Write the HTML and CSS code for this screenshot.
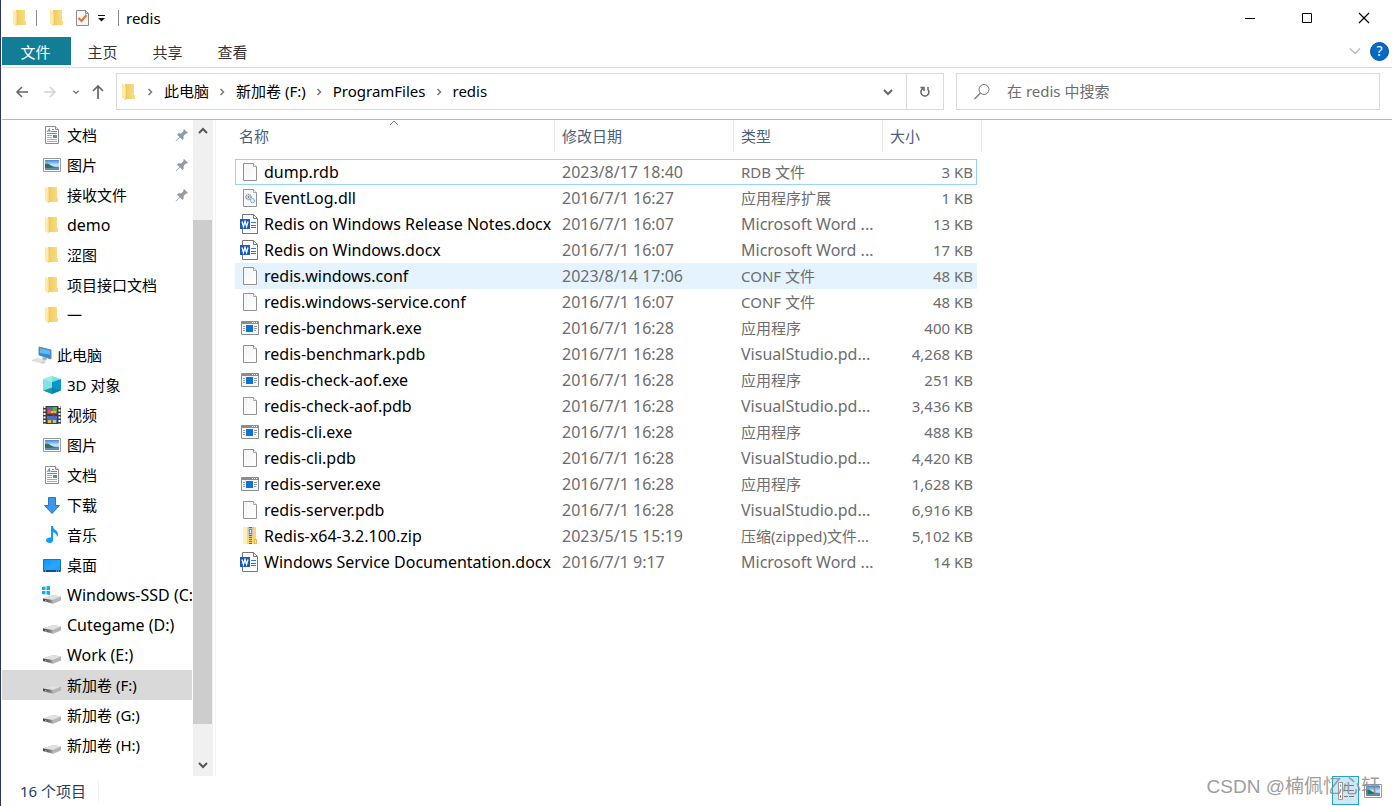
FILE: index.html
```html
<!DOCTYPE html>
<html lang="zh-CN">
<head>
<meta charset="utf-8">
<title>redis</title>
<link rel="stylesheet" href="styles.css">
</head>
<body>
<svg class="defs" aria-hidden="true">
  <defs>
    <linearGradient id="g-folder" x1="0" x2="1"><stop offset="0" stop-color="#f0cb62"/><stop offset="1" stop-color="#fbdd85"/></linearGradient>
    <linearGradient id="g-page" x1="0" y1="0" x2="1" y2="1"><stop offset="0" stop-color="#f3f4f5"/><stop offset="1" stop-color="#ffffff"/></linearGradient>
    <linearGradient id="g-sky" x1="0" y1="0" x2="0" y2="1"><stop offset="0" stop-color="#3f86dc"/><stop offset=".5" stop-color="#c6e6fa"/><stop offset="1" stop-color="#6fa3c8"/></linearGradient>
    <linearGradient id="g-desk" x1="0" y1="0" x2="1" y2="1"><stop offset="0" stop-color="#0d95f7"/><stop offset=".6" stop-color="#2ba7ff"/><stop offset="1" stop-color="#0d95f7"/></linearGradient>
    <linearGradient id="g-drive" x1="0" x2="1"><stop offset="0" stop-color="#454746"/><stop offset=".6" stop-color="#6f7171"/><stop offset="1" stop-color="#9d9fa1"/></linearGradient>
  </defs>
  <symbol id="folder" viewBox="0 0 20 20"><path d="M6 2h9v11h1v4H6z" fill="url(#g-folder)"/><path d="M3 2h1l3 2.500v13.500h-1L3 16z" fill="#ffe9a6"/><path d="M7 4.500V16l-1 2" stroke="#e9bf55" stroke-width=".6" fill="none"/></symbol>
  <symbol id="page" viewBox="0 0 20 20"><path d="M3.500 1.500h10l3 3v14h-13z" fill="url(#g-page)" stroke="#919191"/><path d="M13.500 1.500v3h3" fill="#fff" stroke="#a5a5a5"/></symbol>
  <symbol id="dll" viewBox="0 0 20 20"><use href="#page"/><circle cx="8.500" cy="9" r="2.500" fill="#eee" stroke="#8b9196" stroke-width="1.500" stroke-dasharray="1.200 .6"/><circle cx="8.500" cy="9" r=".9" fill="#7b8288"/><circle cx="12.500" cy="12.500" r="2.100" fill="#e4f3fa" stroke="#7ab4d2" stroke-width="1.300" stroke-dasharray="1.100 .5"/></symbol>
  <symbol id="word" viewBox="0 0 20 20"><path d="M2.500.5h11l4 4v15h-15z" fill="#fff" stroke="#777"/><path d="M13.500.5v4h4" fill="none" stroke="#777"/><path d="M11 8.500h5M11 11.500h5M11 13.500h5" stroke="#2b7cd3"/><path d="M0 5h10v10H0z" fill="#185abd"/><path d="M2 7.500l1.400 5 1.600-5 1.600 5 1.400-5" fill="none" stroke="#fff" stroke-width="1.300"/></symbol>
  <symbol id="exe" viewBox="0 0 20 20"><path d="M1.500 3.500h17v13h-17z" fill="#f6f6f6" stroke="#8a8e92"/><path d="M2 5h16" stroke="#8a8e92" stroke-width="2"/><path d="M12 4.500h1m1 0h1m1 0h1" stroke="#fff"/><path d="M6 7h7v7H6z" fill="#0b74d8"/><path d="M3 8.500h2m-2 2h2m-2 2h2M14 8.500h3m-3 2h3m-3 2h2" stroke="#999"/></symbol>
  <symbol id="zip" viewBox="0 0 20 20"><path d="M3 1h13v12h1v5H3z" fill="#f8d671"/><path d="M3 1h4v17H3z" fill="#fff0b9"/><path d="M14.500 13.500h2v4h-2z" fill="#ffe798" stroke="#dfb74b"/><path d="M8 1h5v8l-1 2H9L8 9z" fill="#c5c6c7"/><path d="M10.500 1v18" stroke="#666" stroke-width="3" stroke-dasharray="1 1"/><path d="M9.500 3.500h2v4h-2z" fill="#eee" stroke="#777" stroke-width=".7"/></symbol>
  <symbol id="document" viewBox="0 0 20 20"><path d="M3.500 1.500h10l3 3v14h-13z" fill="#fff" stroke="#8d8d8d"/><path d="M13.500 1.500v3h3" fill="#eee" stroke="#8d8d8d"/><path d="M5 7l2.500-3.500L8 7M6 6h2M10 4.500h2M9 6.500h6M5 8.500h10" stroke="#2a91cc" stroke-width=".9" fill="none"/><path d="M5 10.500h5m-5 2h5m-5 2h10m-10 2h10" stroke="#ababab"/><path d="M11 10h4v3h-4z" fill="#5b8fae"/></symbol>
  <symbol id="picture" viewBox="0 0 20 20"><path d="M1.500 3.500h17v13h-17z" fill="#fff" stroke="#999"/><path d="M3 5h14v10H3z" fill="url(#g-sky)"/><path d="M3 9c2-1 4 0 6 1.500 3 2 5 1.500 8 2V14H3z" fill="#356b5c"/><path d="M3 13c4 0 8-.5 14-.5V15H3z" fill="#588eb1"/></symbol>
  <symbol id="pc" viewBox="0 0 20 20"><path d="M7 2l12 3v9L7 10z" fill="#218fdb" stroke="#7c8891"/><path d="M8 3.300l10 2.500v4L8 8z" fill="#5bbaf9"/><path d="M11 12l4 1.200-1 2-4-1z" fill="#a3aaaf"/><path d="M0 15.500l5-2 9 2-5 2z" fill="#dfe2e4" stroke="#c8cccf" stroke-width=".6"/><path d="M8 18l4-1.500 2 1-3 1.200z" fill="#c5cbd0"/></symbol>
  <symbol id="cube" viewBox="0 0 20 20"><path d="M10 1l9 3-9 3-9-3z" fill="#72e3e4"/><path d="M1 4l9 3v12l-9-3.500z" fill="#36c4d2"/><path d="M19 4l-9 3v12l9-3.500z" fill="#0797c6"/><path d="M1 4l9-3v12L1 16z" fill="#b4f1ee" opacity=".65"/><path d="M1 15.500l9-3 9 3-9 3.500z" fill="#087e9f" opacity=".65"/></symbol>
  <symbol id="video" viewBox="0 0 20 20"><path d="M1 1h18v18H1z" fill="#3c3c3c"/><path d="M2.500 1v18m15-18v18" stroke="#fff" stroke-width="2" stroke-dasharray="2 1.500"/><path d="M5 2h10v7H5zM5 11h10v7H5z" fill="#416ed0"/><path d="M11 2h4v5h-5z" fill="#78a53b"/><path d="M6 5h3v3H6z" fill="#e15945"/><path d="M9 6h5v2H9zM6 15h3v3H6zM11 15h3v3h-3z" fill="#f0bd26"/><path d="M10 10l2-3 1 5z" fill="#a33227"/></symbol>
  <symbol id="download" viewBox="0 0 20 20"><path d="M6.500 2.500h7v8h4L10 18.500l-7.500-8h4z" fill="#3d96e7" stroke="#2876bf"/></symbol>
  <symbol id="music" viewBox="0 0 20 20"><path d="M9 1h2c0 4 5 4 5 8 0 2-1 3-1 3 0-3-2-4-4-5v8a3 3 0 0 1-3 3c-2 0-4-1-4-2.500S6 12 9 12.500z" fill="#0e9bf2"/></symbol>
  <symbol id="desktop" viewBox="0 0 20 20"><path d="M1.500 4.500h17v12h-17z" fill="url(#g-desk)" stroke="#1477b9"/><path d="M2 16h16" stroke="#0c5284" stroke-width="2"/><path d="M3 16h1m10 0h1m1 0h1" stroke="#b7e1ff"/></symbol>
  <symbol id="drive" viewBox="0 0 20 20"><path d="M1 13.500L11 10l8 1.500v4l-8 3.200-10-2.700z" fill="#b3b5b7"/><path d="M1 13.500L11 10l8 1.500-8.500 3.500z" fill="#e0e1e3"/><path d="M1 13.500l9.500 1.500v3.500L1 16z" fill="url(#g-drive)"/><path d="M3 15.700l1.500.4" stroke="#a9d99e"/></symbol>
  <symbol id="windrive" viewBox="0 0 20 20"><use href="#drive"/><path d="M0 2l3.500-.5V5H0zM4.500 1.300L8 1v4H4.500zM0 6h3.500v3.500L0 9zM4.500 6H8v4l-3.500-.5z" fill="#0bb1f1"/></symbol>
  <symbol id="pin" viewBox="0 0 14 14"><path d="M9 1l4 4-1 .6-1-.2-2.500 2.500.2 2.600L7.500 12 5 9.500 1.500 13l-1 .5.500-1L4.500 9 2 6.500 3.500 5.300l2.600.2L8.600 3 8.300 2z" fill="#8f9ca5"/></symbol>
  <symbol id="right" viewBox="0 0 8 10"><path d="M2.500 2l3 3-3 3" fill="none" stroke="#777" stroke-width="1.500"/></symbol>
  <symbol id="down" viewBox="0 0 12 12"><path d="M2 4l4 4 4-4" fill="none" stroke="currentColor" stroke-width="2"/></symbol>
</svg>

<div class="window">
  <header class="titlebar">
    <svg class="icon"><use href="#folder"/></svg>
    <span class="divider"></span>
    <button class="quick" aria-label="新建文件夹"><svg class="icon"><use href="#folder"/></svg></button>
    <button class="quick" aria-label="属性"><svg class="icon" viewBox="0 0 20 20"><path d="M4.500 2.500h9l3 3v12h-12z" fill="#f6f6f7" stroke="#8c8c8c"/><path d="M13.500 2.500v3h3" fill="none" stroke="#8c8c8c"/><path d="M6.500 10l3 3 5-6" fill="none" stroke="#ed6933" stroke-width="2"/></svg></button>
    <button class="quick menu" aria-label="自定义快速访问工具栏"><svg width="8" height="8" viewBox="0 0 8 8"><path d="M0 1.500h7" stroke="#111"/><path d="M0 4h7L3.500 7.500z" fill="#111"/></svg></button>
    <span class="divider"></span>
    <h1 class="title">redis</h1>
    <div class="controls">
      <button aria-label="最小化"><svg width="12" height="12" viewBox="0 0 12 12"><path d="M1 6.500h10" stroke="#000"/></svg></button>
      <button aria-label="最大化"><svg width="12" height="12" viewBox="0 0 12 12"><path d="M1.500 1.500h9v9h-9z" fill="none" stroke="#000"/></svg></button>
      <button aria-label="关闭"><svg width="12" height="12" viewBox="0 0 12 12"><path d="M1 1l10 10M11 1L1 11" stroke="#000" stroke-width="1.200"/></svg></button>
    </div>
  </header>

  <div class="ribbon">
    <button class="tab active">文件</button>
    <button class="tab">主页</button>
    <button class="tab">共享</button>
    <button class="tab">查看</button>
    <div class="ribbon-end">
      <button aria-label="展开功能区"><svg width="14" height="12" viewBox="0 0 14 12"><path d="M2 3.500l5 5 5-5" fill="none" stroke="#bcbcbc" stroke-width="1.500"/></svg></button>
      <button class="help" aria-label="帮助">?</button>
    </div>
  </div>

  <div class="toolbar">
    <div class="history">
      <button aria-label="后退"><svg width="14" height="14" viewBox="0 0 14 14"><path d="M13 7H2m5-5L2 7l5 5" fill="none" stroke="#666" stroke-width="1.500"/></svg></button>
      <button aria-label="前进"><svg width="14" height="14" viewBox="0 0 14 14"><path d="M1 7h11M7 2l5 5-5 5" fill="none" stroke="#d2d2d2" stroke-width="1.500"/></svg></button>
      <button class="recent" aria-label="最近浏览的位置"><svg width="8" height="8" viewBox="0 0 12 12"><use href="#down"/></svg></button>
      <button aria-label="向上"><svg width="14" height="16" viewBox="0 0 14 16"><path d="M7 15V2M2 7l5-5 5 5" fill="none" stroke="#666" stroke-width="1.700"/></svg></button>
    </div>
    <nav class="address" aria-label="地址">
      <svg class="icon"><use href="#folder"/></svg>
      <svg class="sep"><use href="#right"/></svg><button class="crumb">此电脑</button>
      <svg class="sep"><use href="#right"/></svg><button class="crumb">新加卷 (F:)</button>
      <svg class="sep"><use href="#right"/></svg><button class="crumb">ProgramFiles</button>
      <svg class="sep"><use href="#right"/></svg><button class="crumb">redis</button>
      <button class="drop" aria-label="以前的位置"><svg width="12" height="12"><use href="#down"/></svg></button>
      <button class="refresh" aria-label="刷新"><svg width="14" height="14" viewBox="0 0 14 14"><path d="M5 3.500A4 4 0 1 0 9.500 4M2.500 2.500H6v3.500M10 2v2" fill="none" stroke="#666" stroke-width="1.500"/></svg></button>
    </nav>
    <label class="search">
      <svg width="18" height="18" viewBox="0 0 18 18"><circle cx="11" cy="6.500" r="5" fill="none" stroke="#777"/><path d="M7.500 10L1.500 16" stroke="#777" stroke-width="1.200"/></svg>
      <input type="search" placeholder="在 redis 中搜索" aria-label="搜索">
    </label>
  </div>

  <div class="body">
    <aside class="sidebar">
      <ul class="tree">
        <li><a href="#"><svg class="icon"><use href="#document"/></svg><span>文档</span><svg class="pin"><use href="#pin"/></svg></a></li>
        <li><a href="#"><svg class="icon"><use href="#picture"/></svg><span>图片</span><svg class="pin"><use href="#pin"/></svg></a></li>
        <li><a href="#"><svg class="icon"><use href="#folder"/></svg><span>接收文件</span><svg class="pin"><use href="#pin"/></svg></a></li>
        <li><a href="#"><svg class="icon"><use href="#folder"/></svg><span class="latin">demo</span></a></li>
        <li><a href="#"><svg class="icon"><use href="#folder"/></svg><span>涩图</span></a></li>
        <li><a href="#"><svg class="icon"><use href="#folder"/></svg><span>项目接口文档</span></a></li>
        <li><a href="#"><svg class="icon"><use href="#folder"/></svg><span>一</span></a></li>
        <li class="root"><a href="#"><svg class="icon"><use href="#pc"/></svg><span>此电脑</span></a></li>
        <li><a href="#"><svg class="icon"><use href="#cube"/></svg><span>3D 对象</span></a></li>
        <li><a href="#"><svg class="icon"><use href="#video"/></svg><span>视频</span></a></li>
        <li><a href="#"><svg class="icon"><use href="#picture"/></svg><span>图片</span></a></li>
        <li><a href="#"><svg class="icon"><use href="#document"/></svg><span>文档</span></a></li>
        <li><a href="#"><svg class="icon"><use href="#download"/></svg><span>下载</span></a></li>
        <li><a href="#"><svg class="icon"><use href="#music"/></svg><span>音乐</span></a></li>
        <li><a href="#"><svg class="icon"><use href="#desktop"/></svg><span>桌面</span></a></li>
        <li><a href="#"><svg class="icon"><use href="#windrive"/></svg><span class="latin">Windows-SSD (C:)</span></a></li>
        <li><a href="#"><svg class="icon"><use href="#drive"/></svg><span class="latin">Cutegame (D:)</span></a></li>
        <li><a href="#"><svg class="icon"><use href="#drive"/></svg><span class="latin">Work (E:)</span></a></li>
        <li><a href="#" class="selected"><svg class="icon"><use href="#drive"/></svg><span>新加卷 (F:)</span></a></li>
        <li><a href="#"><svg class="icon"><use href="#drive"/></svg><span>新加卷 (G:)</span></a></li>
        <li><a href="#"><svg class="icon"><use href="#drive"/></svg><span>新加卷 (H:)</span></a></li>
      </ul>
      <div class="scrollbar">
        <button aria-label="向上滚动"><svg class="flip" width="12" height="12"><use href="#down"/></svg></button>
        <div class="track"><div class="thumb"></div></div>
        <button aria-label="向下滚动"><svg width="12" height="12"><use href="#down"/></svg></button>
      </div>
    </aside>

    <main class="files">
      <table class="list">
        <colgroup><col class="c-name"><col class="c-date"><col class="c-type"><col class="c-size"><col class="c-end"></colgroup>
        <thead>
          <tr>
            <th><span class="head first">名称<svg class="sort" width="10" height="6" viewBox="0 0 10 6"><path d="M1 5l4-4 4 4" fill="none" stroke="#777"/></svg></span></th>
            <th><span class="head">修改日期</span></th>
            <th><span class="head">类型</span></th>
            <th colspan="2"><span class="head">大小</span></th>
          </tr>
        </thead>
        <tbody>
          <tr class="focused"><td><span class="name"><svg class="icon"><use href="#page"/></svg>dump.rdb</span></td><td class="latin">2023/8/17 18:40</td><td>RDB 文件</td><td>3 KB</td></tr>
          <tr><td><span class="name"><svg class="icon"><use href="#dll"/></svg>EventLog.dll</span></td><td class="latin">2016/7/1 16:27</td><td>应用程序扩展</td><td>1 KB</td></tr>
          <tr><td><span class="name"><svg class="icon"><use href="#word"/></svg>Redis on Windows Release Notes.docx</span></td><td class="latin">2016/7/1 16:07</td><td class="latin">Microsoft Word ...</td><td>13 KB</td></tr>
          <tr><td><span class="name"><svg class="icon"><use href="#word"/></svg>Redis on Windows.docx</span></td><td class="latin">2016/7/1 16:07</td><td class="latin">Microsoft Word ...</td><td>17 KB</td></tr>
          <tr class="hovered"><td><span class="name"><svg class="icon"><use href="#page"/></svg>redis.windows.conf</span></td><td class="latin">2023/8/14 17:06</td><td>CONF 文件</td><td>48 KB</td></tr>
          <tr><td><span class="name"><svg class="icon"><use href="#page"/></svg>redis.windows-service.conf</span></td><td class="latin">2016/7/1 16:07</td><td>CONF 文件</td><td>48 KB</td></tr>
          <tr><td><span class="name"><svg class="icon"><use href="#exe"/></svg>redis-benchmark.exe</span></td><td class="latin">2016/7/1 16:28</td><td>应用程序</td><td>400 KB</td></tr>
          <tr><td><span class="name"><svg class="icon"><use href="#page"/></svg>redis-benchmark.pdb</span></td><td class="latin">2016/7/1 16:28</td><td class="latin">VisualStudio.pd...</td><td>4,268 KB</td></tr>
          <tr><td><span class="name"><svg class="icon"><use href="#exe"/></svg>redis-check-aof.exe</span></td><td class="latin">2016/7/1 16:28</td><td>应用程序</td><td>251 KB</td></tr>
          <tr><td><span class="name"><svg class="icon"><use href="#page"/></svg>redis-check-aof.pdb</span></td><td class="latin">2016/7/1 16:28</td><td class="latin">VisualStudio.pd...</td><td>3,436 KB</td></tr>
          <tr><td><span class="name"><svg class="icon"><use href="#exe"/></svg>redis-cli.exe</span></td><td class="latin">2016/7/1 16:28</td><td>应用程序</td><td>488 KB</td></tr>
          <tr><td><span class="name"><svg class="icon"><use href="#page"/></svg>redis-cli.pdb</span></td><td class="latin">2016/7/1 16:28</td><td class="latin">VisualStudio.pd...</td><td>4,420 KB</td></tr>
          <tr><td><span class="name"><svg class="icon"><use href="#exe"/></svg>redis-server.exe</span></td><td class="latin">2016/7/1 16:28</td><td>应用程序</td><td>1,628 KB</td></tr>
          <tr><td><span class="name"><svg class="icon"><use href="#page"/></svg>redis-server.pdb</span></td><td class="latin">2016/7/1 16:28</td><td class="latin">VisualStudio.pd...</td><td>6,916 KB</td></tr>
          <tr><td><span class="name"><svg class="icon"><use href="#zip"/></svg>Redis-x64-3.2.100.zip</span></td><td class="latin">2023/5/15 15:19</td><td>压缩(zipped)文件...</td><td>5,102 KB</td></tr>
          <tr><td><span class="name"><svg class="icon"><use href="#word"/></svg>Windows Service Documentation.docx</span></td><td class="latin">2016/7/1 9:17</td><td class="latin">Microsoft Word ...</td><td>14 KB</td></tr>
        </tbody>
      </table>
    </main>
  </div>

  <footer class="status">
    <span class="count">16 个项目</span>
    <div class="views">
      <button class="view on" aria-label="详细信息"><svg width="20" height="20" viewBox="0 0 20 20"><path d="M2.500 1.500h4v17h-4z" fill="#fff" stroke="#999"/><path d="M4 4.500h1" stroke="#469bd0" stroke-width="2"/><path d="M4 9.500h1" stroke="#d98a36" stroke-width="2"/><path d="M4 15.500h1" stroke="#b63b32" stroke-width="2"/><path d="M8 4.500h4m1 0h5M8 9.500h4m1 0h5M8 15.500h4m1 0h5" stroke="#777"/></svg></button>
      <button class="view" aria-label="大缩略图"><svg class="icon"><use href="#picture"/></svg></button>
    </div>
    <span class="watermark">CSDN @楠佩忆心轩</span>
  </footer>
</div>
</body>
</html>
```
FILE: styles.css
```css
* { box-sizing: border-box; }

body {
  margin: 0;
  background: #fff;
  color: #000;
  font: 15px/20px "Noto Sans", "Noto Sans CJK SC", sans-serif;
}

button {
  display: flex;
  align-items: center;
  justify-content: center;
  margin: 0;
  padding: 0;
  border: 0;
  background: none;
  color: inherit;
  font: inherit;
}

.defs { position: absolute; width: 0; height: 0; }
.icon { flex: none; display: block; width: 20px; height: 20px; }
.latin { font-size: 16px; }

.window {
  display: flex;
  flex-direction: column;
  min-height: 100vh;
  border-left: 1px solid #2a3768;
  padding-left: 1px;
}

.titlebar { display: flex; align-items: center; height: 37px; padding: 0 0 1px 8px; }
.divider { width: 1px; height: 16px; background: #8c8c8c; }
.titlebar > .icon { margin-right: 6px; }
.quick { margin-left: 10px; }
.quick + .quick { margin-left: 5px; }
.quick + .quick.menu { width: 16px; height: 20px; margin: 0 8px 0 2px; }
.title { margin: 0 0 0 7px; font-size: 15px; font-weight: 400; }
.controls { display: flex; margin-left: auto; }
.controls button { width: 57px; height: 36px; }

.ribbon { display: flex; height: 31px; padding-bottom: 2px; border-bottom: 1px solid #dcdcdc; }
.tab { width: 65px; padding: 2px 2px 0 0; color: #333; }
.tab.active { width: 69px; background: #127e96; color: #fff; }
.ribbon-end { display: flex; align-items: center; gap: 8px; margin-left: auto; padding-right: 3px; }
.help {
  width: 19px;
  height: 19px;
  border: 1px solid #07529a;
  border-radius: 50%;
  background: #0669c9;
  color: #fff;
  font-size: 14px;
}

.toolbar {
  display: flex;
  align-items: center;
  height: 52px;
  padding: 0 12px 4px;
  border-bottom: 1px solid #b8b8b8;
}
.history { display: flex; flex: none; align-items: center; width: 102px; color: #777; }
.history button { width: 28px; height: 30px; }
.history button:first-child { width: 16px; }
.history button:nth-child(2) { width: 42px; }
.history .recent { width: 10px; }
.history button:last-child { width: 36px; }
.address {
  flex: 828 1 828px;
  display: flex;
  align-items: center;
  height: 37px;
  border: 1px solid #d9d9d9;
  padding-left: 2px;
}
.sep { flex: none; width: 8px; height: 10px; margin: 0 10px 0 9px; }
.address .icon + .sep { margin-left: 7px; }
.crumb { padding-bottom: 2px; }
.drop { width: 36px; height: 35px; margin-left: auto; color: #666; }
.refresh { width: 37px; height: 35px; border-left: 1px solid #d9d9d9; }
.search {
  flex: 424 1 424px;
  display: flex;
  align-items: center;
  gap: 16px;
  height: 37px;
  margin-left: 12px;
  padding-left: 16px;
  border: 1px solid #d9d9d9;
}
.search input { flex: 1; min-width: 0; padding: 0 0 2px; border: 0; outline: 0; background: none; font: inherit; }
.search input::placeholder { color: #6d6d6d; opacity: 1; }

.body { flex: 1; display: grid; grid-template-columns: 214px 1fr; }

.sidebar { display: grid; grid-template-columns: 1fr 20px; border-right: 1px solid #f3f3f3; padding-right: 2px; }
.tree { min-width: 0; margin: 0; padding: 0 1px 0 0; list-style: none; }
.tree a {
  display: flex;
  align-items: center;
  gap: 5px;
  height: 30px;
  padding-left: 40px;
  overflow: hidden;
  color: #000;
  text-decoration: none;
  white-space: nowrap;
}
.tree .root { margin-top: 10px; }
.tree .root a { padding-left: 30px; }
.tree .selected { background: #d9d9d9; }
.pin { flex: none; width: 14px; height: 14px; margin: 0 3px 0 auto; }

.scrollbar { display: flex; flex-direction: column; background: #f0f0f0; color: #555; }
.scrollbar button { height: 22px; }
.flip { transform: rotate(180deg); }
.track { flex: 1; display: flex; flex-direction: column; padding-top: 78px; }
.thumb { height: 504px; margin-right: 1px; background: #cdcdcd; }

.files { padding-left: 19px; }
.list { width: 747px; border-spacing: 0; table-layout: fixed; color: #6d6d6d; white-space: nowrap; }
.c-name { width: 320px; }
.c-date { width: 179px; }
.c-type { width: 149px; }
.c-size { width: 94px; }
.c-end { width: 5px; }
.list th { padding: 0 0 7px; font-weight: 400; text-align: left; }
.head {
  display: flex;
  align-items: center;
  position: relative;
  height: 32px;
  padding-left: 7px;
  border-right: 1px solid #e5e5e5;
  color: #4c607a;
}
.head.first { padding-left: 4px; }
.sort { position: absolute; top: 0; left: 50%; translate: -6px 0; }
.list td { height: 26px; padding: 0 0 0 7px; border: solid transparent; border-width: 1px 0; }
.list td:first-child { padding-left: 4px; border-left-width: 1px; color: #000; font-size: 16px; }
.list td:last-child { padding: 0 3px 0 0; border-right-width: 1px; text-align: right; }
.name { display: flex; align-items: center; gap: 4px; }
.list .focused td { border-color: #99d1ff; }
.hovered td { background: #e5f3ff; }

.status {
  display: flex;
  align-items: center;
  position: relative;
  height: 30px;
  padding: 0 6px 1px 18px;
  color: #24405f;
}
.count { padding-right: 12px; border-right: 1px solid #eee; }
.views { display: flex; margin-left: auto; }
.view { width: 27px; height: 29px; }
.view.on { border: 1px solid #26a0da; background: #cce8f7; }
.watermark {
  position: absolute;
  right: 12px;
  bottom: 6px;
  color: #8e8e8e;
  font-size: 19px;
  line-height: 26px;
  font-family: "Liberation Sans", "Noto Sans CJK SC", sans-serif;
  opacity: .85;
}
```
